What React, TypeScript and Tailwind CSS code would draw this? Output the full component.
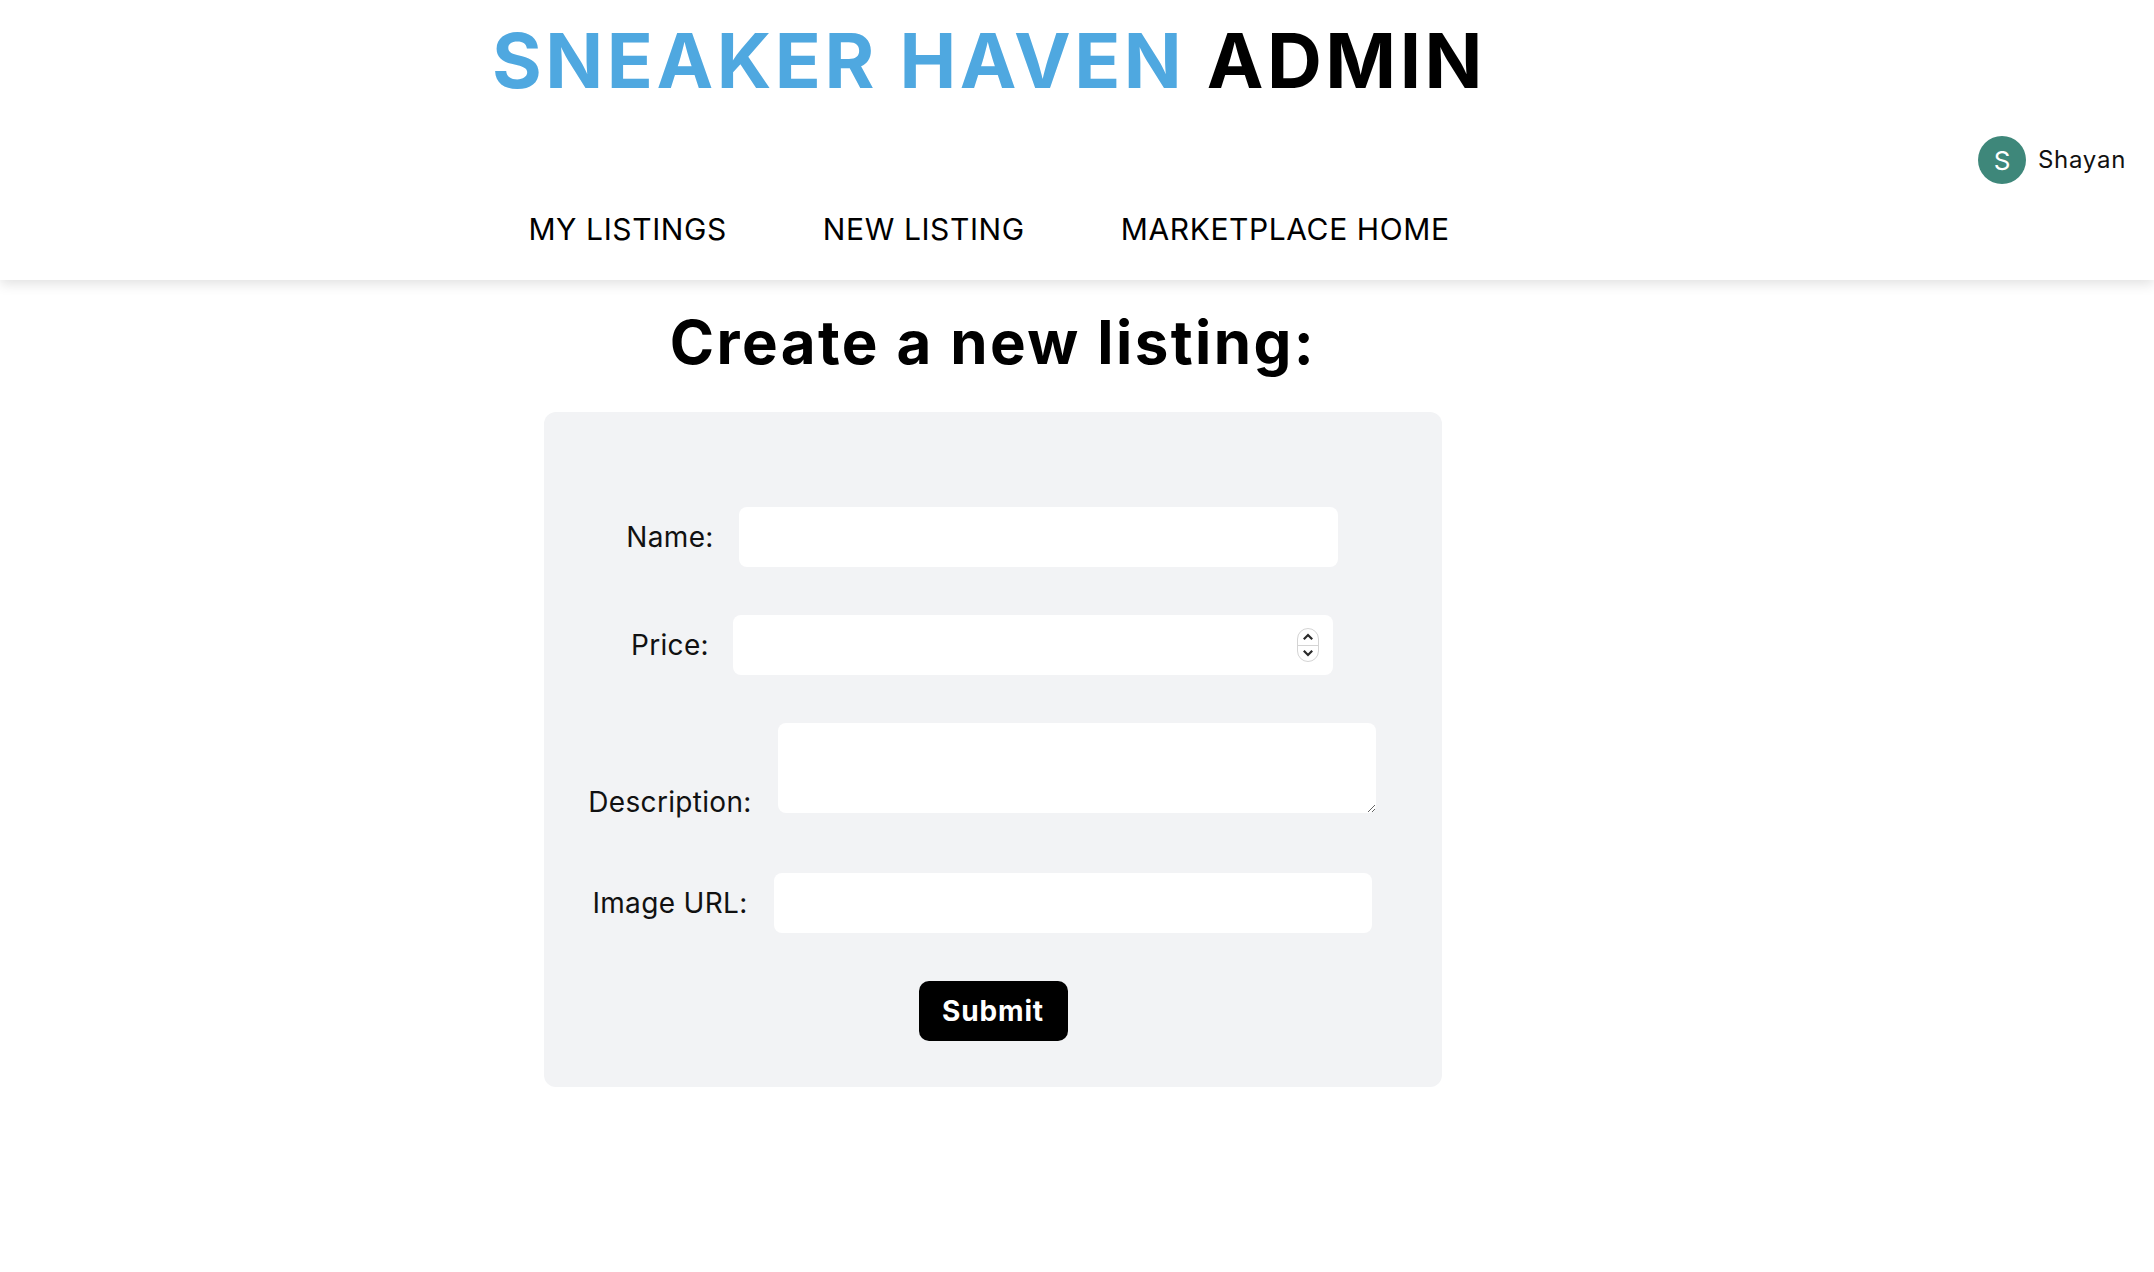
import { useState } from "react";

const navLinks = ["MY LISTINGS", "NEW LISTING", "MARKETPLACE HOME"];

const Spinner = () => {
  return (
    <div className="absolute right-[14px] top-[13px] flex h-[34px] w-[22px] flex-col overflow-hidden rounded-full border border-[#d4d4d4] bg-white">
      <div className="flex flex-1 items-center justify-center border-b border-[#d4d4d4]">
        <svg width="12" height="8" viewBox="0 0 12 8">
          <path d="M1.8 6.2 L6 2 L10.2 6.2" fill="none" stroke="#2a2a2a" strokeWidth="2.2" />
        </svg>
      </div>
      <div className="flex flex-1 items-center justify-center">
        <svg width="12" height="8" viewBox="0 0 12 8">
          <path d="M1.8 1.8 L6 6 L10.2 1.8" fill="none" stroke="#2a2a2a" strokeWidth="2.2" />
        </svg>
      </div>
    </div>
  );
};

const App = () => {
  const [name, setName] = useState("");
  const [price, setPrice] = useState("");
  const [description, setDescription] = useState("");
  const [imageUrl, setImageUrl] = useState("");

  return (
    <div className="min-h-[1272px] bg-white font-['Inter',sans-serif] text-black">
      {/* header */}
      <header className="flex h-[280px] w-full bg-white shadow-[0_4px_12px_rgba(0,0,0,0.12)]">
        <div className="flex flex-1 flex-col items-center">
          <h1 className="mt-[22px] text-[76px] font-bold leading-none tracking-[0.046em]">
            <span className="text-[#4fa8e0]">SNEAKER HAVEN</span> ADMIN
          </h1>
          <nav className="mt-[116px] flex gap-[96px] text-[30px] leading-none tracking-[0.02em]">
            {navLinks.map((link) => (
              <a key={link} href="#" className="text-black">
                {link}
              </a>
            ))}
          </nav>
        </div>

        {/* user */}
        <div className="flex w-[176px] items-start pt-[136px]">
          <div className="flex items-center gap-[12px]">
            <div className="flex h-[48px] w-[48px] items-center justify-center rounded-full bg-[#3e877a] text-[26px] text-white">
              S
            </div>
            <p className="text-[24px] tracking-[0.03em] text-[#111]">Shayan</p>
          </div>
        </div>
      </header>

      {/* form */}
      <main className="flex flex-col items-center pr-[168px]">
        <h2 className="mt-[32px] text-[60px] font-bold leading-none tracking-[0.04em]">
          Create a new listing:
        </h2>

        <form
          className="mt-[40px] flex w-[898px] flex-col items-center rounded-xl bg-[#f2f3f5] pt-[95px] pb-[46px] tracking-[0.02em]"
          onSubmit={(e) => e.preventDefault()}
        >
          <div className="mr-[22px] flex items-center gap-[25px]">
            <label className="text-[28px] leading-none text-[#111]">Name:</label>
            <input
              className="h-[60px] w-[599px] rounded-lg bg-white px-3 outline-none"
              value={name}
              onChange={(e) => setName(e.target.value)}
            />
          </div>

          <div className="mt-[48px] mr-[22px] flex items-center gap-[24px]">
            <label className="text-[28px] leading-none text-[#111]">Price:</label>
            <div className="relative">
              <input
                className="h-[60px] w-[600px] rounded-lg bg-white px-3 outline-none"
                value={price}
                onChange={(e) => setPrice(e.target.value)}
              />
              <Spinner />
            </div>
          </div>

          <div className="mt-[48px] mr-[22px] flex items-end gap-[26px]">
            <label className="mb-[-3px] text-[28px] leading-none text-[#111]">
              Description:
            </label>
            <textarea
              className="block h-[90px] w-[598px] rounded-lg bg-white px-3 outline-none"
              value={description}
              onChange={(e) => setDescription(e.target.value)}
            />
          </div>

          <div className="mt-[60px] mr-[22px] flex items-center gap-[26px]">
            <label className="text-[28px] leading-none text-[#111]">Image URL:</label>
            <input
              className="h-[60px] w-[598px] rounded-lg bg-white px-3 outline-none"
              value={imageUrl}
              onChange={(e) => setImageUrl(e.target.value)}
            />
          </div>

          <button
            type="submit"
            className="mt-[48px] h-[60px] w-[149px] rounded-[10px] bg-black text-[28px] font-bold tracking-[0.03em] text-white"
          >
            Submit
          </button>
        </form>
      </main>
    </div>
  );
};

export default App;
